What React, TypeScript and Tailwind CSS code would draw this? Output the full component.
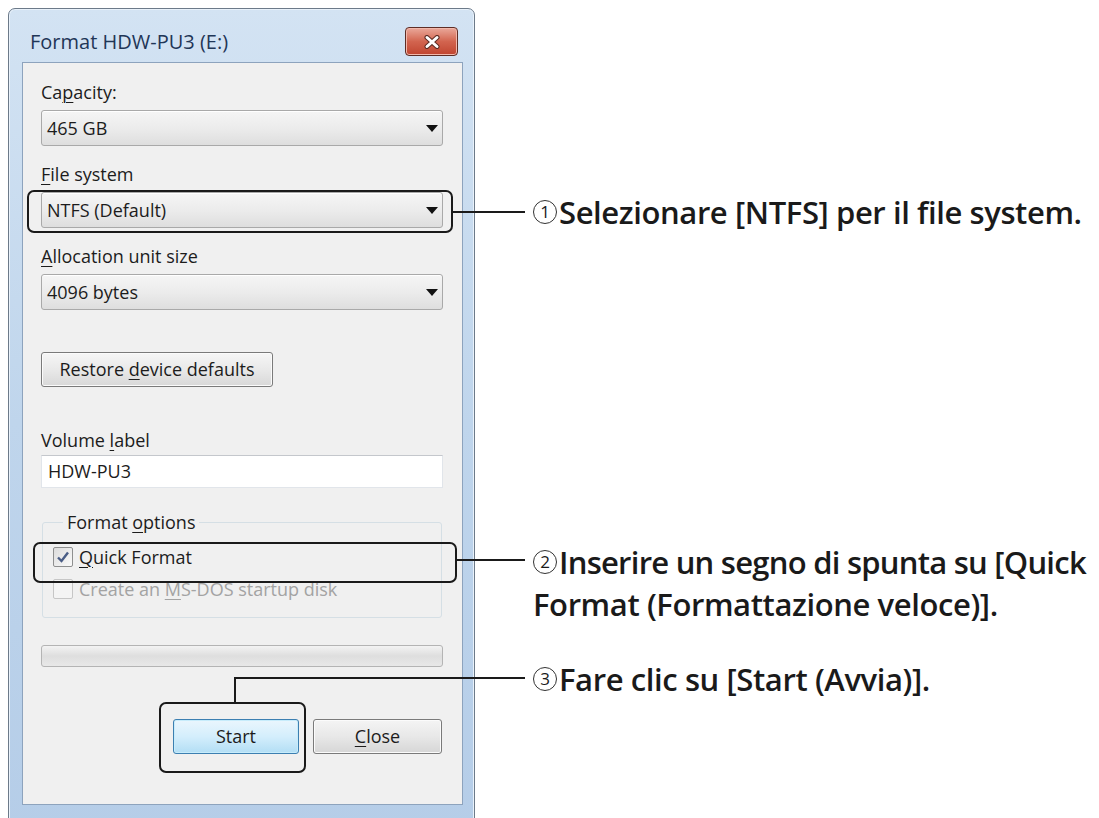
import React from "react";

function U({ children }: { children: React.ReactNode }) {
  return <span className="underline decoration-1 underline-offset-[3px]">{children}</span>;
}

function Combo({ value }: { value: string }) {
  return (
    <div className="flex h-[36px] items-center justify-between rounded-[3px] border border-[#a9a9a9] bg-gradient-to-b from-[#f5f5f5] via-[#ececec] to-[#dedede] pl-[5px] pr-[4px] shadow-[inset_0_1px_0_#ffffff]">
      <span>{value}</span>
      <svg width="12" height="7" viewBox="0 0 12 7">
        <path d="M0 0h12L6 7z" fill="#111" />
      </svg>
    </div>
  );
}

function Label({ children, className = "" }: { children: React.ReactNode; className?: string }) {
  return <div className={"h-[22px] leading-[22px] " + className}>{children}</div>;
}

function Circled({ n }: { n: string }) {
  return (
    <span className="mr-[2px] inline-flex h-[24px] w-[24px] translate-y-[-4px] items-center justify-center rounded-full border border-[#333] align-middle text-[17px] font-normal leading-none tracking-normal">
      {n}
    </span>
  );
}

export default function App() {
  return (
    <div
      className="relative h-[818px] w-[1099px] overflow-hidden bg-white text-[#1c1c1c]"
      style={{ fontFamily: '"Open Sans", "Noto Sans", sans-serif' }}
    >
      {/* Dialog window */}
      <div className="ml-[8px] pt-[8px]">
        <div className="flex h-[830px] w-[467px] flex-col rounded-t-[7px] border border-[#6c7a89] bg-gradient-to-b from-[#d3e3f3] via-[#bfd5ec] to-[#b5cde8] pl-[13px] pr-[11px] shadow-[inset_0_0_0_1px_#e9f2fb]">
          {/* Title bar */}
          <div className="flex h-[53px] items-start justify-between">
            <div className="ml-[8px] mt-[22px] text-[20px] leading-[22px] text-[#1f3657]">Format HDW-PU3 (E:)</div>
            <div className="mr-[5px] mt-[18px] flex h-[29px] w-[53px] items-center justify-center rounded-[4px] border border-[#5e2d25] bg-gradient-to-b from-[#e9a89a] via-[#d2644f] to-[#c0442f] shadow-[inset_0_0_0_1px_#f2b8ab]">
              <svg width="18" height="14" viewBox="0 0 18 14">
                <path d="M4 2.5 L14 11.5 M14 2.5 L4 11.5" stroke="#5b2a22" strokeWidth="5" strokeLinecap="round" />
                <path d="M4 2.5 L14 11.5 M14 2.5 L4 11.5" stroke="#ffffff" strokeWidth="3" strokeLinecap="round" />
              </svg>
            </div>
          </div>

          {/* Client area */}
          <div className="flex h-[743px] flex-col border border-[#8da3bd] bg-[#f0f0f0] pl-[18px] pr-[19px] text-[18px]">
            <Label className="mt-[18px]">
              Ca<U>p</U>acity:
            </Label>
            <div className="mt-[7px]">
              <Combo value="465 GB" />
            </div>
            <Label className="mt-[17px]">
              <U>F</U>ile system
            </Label>
            <div className="mt-[7px]">
              <Combo value="NTFS (Default)" />
            </div>
            <Label className="mt-[17px]">
              <U>A</U>llocation unit size
            </Label>
            <div className="mt-[7px]">
              <Combo value="4096 bytes" />
            </div>

            <div className="mt-[42px] flex h-[35px] w-[232px] items-center justify-center rounded-[3px] border border-[#7a7a7a] bg-gradient-to-b from-[#f6f6f6] via-[#e9e9e9] to-[#d8d8d8] shadow-[inset_0_0_0_1px_#fbfbfb]">
              <span>
                Restore <U>d</U>evice defaults
              </span>
            </div>

            <Label className="mt-[42px]">
              Volume <U>l</U>abel
            </Label>
            <div className="mt-[4px] flex h-[33px] items-center border border-[#e1e5ea] border-t-[#c4c7cc] bg-white pl-[6px]">
              HDW-PU3
            </div>

            <fieldset className="mx-[1px] mt-[23px] rounded-[3px] border border-[#d5dfe5] pb-[12px] pl-[10px]">
              <legend className="ml-[10px] h-[22px] px-[4px] leading-[22px]">
                Format <U>o</U>ptions
              </legend>
              <div className="mt-[8px] flex h-[32px] items-center gap-[6px]">
                <div className="flex h-[20px] w-[20px] items-center justify-center rounded-[2px] border border-[#8e8f8f] bg-gradient-to-br from-[#dcdcdc] to-[#fafafa]">
                  <svg width="14" height="14" viewBox="0 0 14 14">
                    <path d="M2 7.5 L5.5 11 L12 2.5" fill="none" stroke="#4a5d86" strokeWidth="2.4" />
                  </svg>
                </div>
                <span>
                  <U>Q</U>uick Format
                </span>
              </div>
              <div className="flex h-[32px] items-center gap-[6px] text-[#a3a3a3]">
                <div className="h-[20px] w-[20px] rounded-[2px] border border-[#c6c6c6] bg-[#f4f4f4]" />
                <span>
                  Create an <U>M</U>S-DOS startup disk
                </span>
              </div>
            </fieldset>

            <div className="mt-[27px] h-[22px] rounded-[3px] border border-[#b4b4b4] bg-gradient-to-b from-[#f3f3f3] via-[#dedede] to-[#e8e8e8]" />

            <div className="mt-[52px] flex justify-end gap-[14px] pr-[1px]">
              <div className="flex h-[35px] w-[126px] items-center justify-center rounded-[3px] border border-[#3c7fb1] bg-gradient-to-b from-[#eaf6fd] via-[#d4eefc] to-[#b2def5] shadow-[inset_0_0_0_1px_#c7ecfb]">
                Start
              </div>
              <div className="flex h-[35px] w-[129px] items-center justify-center rounded-[3px] border border-[#7a7a7a] bg-gradient-to-b from-[#f4f4f4] via-[#e8e8e8] to-[#d6d6d6] shadow-[inset_0_0_0_1px_#fbfbfb]">
                <span>
                  <U>C</U>lose
                </span>
              </div>
            </div>
          </div>
        </div>
      </div>

      {/* Annotation callouts */}
      <div className="absolute left-[27px] top-[190px] h-[43px] w-[426px] rounded-[7px] border-2 border-[#1a1a1a]" />
      <div className="absolute left-[453px] top-[211px] h-[2px] w-[72px] bg-[#1a1a1a]" />
      <div className="absolute left-[533px] top-[191px] whitespace-nowrap text-[31px] font-semibold leading-[42px] tracking-[-0.4px] text-[#1a1a1a]">
        <Circled n="1" />
        Selezionare [NTFS] per il file system.
      </div>

      <div className="absolute left-[33px] top-[542px] h-[41px] w-[424px] rounded-[7px] border-2 border-[#1a1a1a]" />
      <div className="absolute left-[457px] top-[559px] h-[2px] w-[68px] bg-[#1a1a1a]" />
      <div className="absolute left-[533px] top-[541px] text-[31px] font-semibold leading-[42px] tracking-[-0.4px] text-[#1a1a1a]">
        <div className="whitespace-nowrap tracking-[-0.75px]">
          <Circled n="2" />
          Inserire un segno di spunta su [Quick
        </div>
        <div className="whitespace-nowrap">Format (Formattazione veloce)].</div>
      </div>

      <div className="absolute left-[159px] top-[702px] h-[71px] w-[147px] rounded-[7px] border-2 border-[#1a1a1a]" />
      <div className="absolute left-[234px] top-[677px] h-[26px] w-[2px] bg-[#1a1a1a]" />
      <div className="absolute left-[234px] top-[677px] h-[2px] w-[291px] bg-[#1a1a1a]" />
      <div className="absolute left-[533px] top-[658px] whitespace-nowrap text-[31px] font-semibold leading-[42px] tracking-[-0.4px] text-[#1a1a1a]">
        <Circled n="3" />
        Fare clic su [Start (Avvia)].
      </div>
    </div>
  );
}
